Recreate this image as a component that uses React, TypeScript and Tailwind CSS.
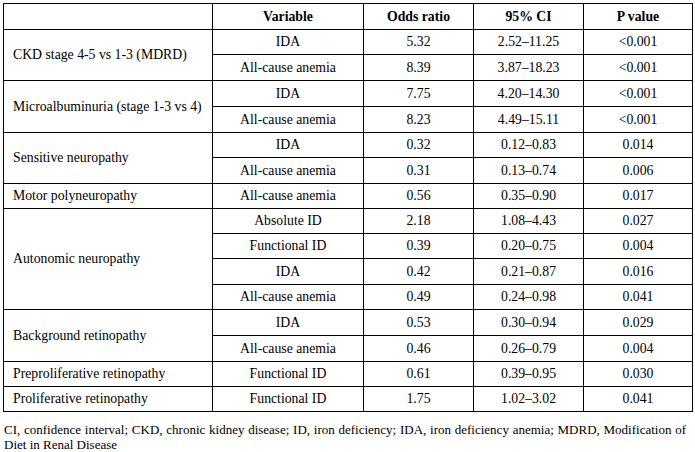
import React from "react";

type Row = { v: string; or: string; ci: string; p: string; h: string };
type Group = { label: string; rows: Row[] };

const groups: Group[] = [
  {
    label: "CKD stage 4-5 vs 1-3 (MDRD)",
    rows: [
      { v: "IDA", or: "5.32", ci: "2.52–11.25", p: "<0.001", h: "h-[25px]" },
      { v: "All-cause anemia", or: "8.39", ci: "3.87–18.23", p: "<0.001", h: "h-[26px]" },
    ],
  },
  {
    label: "Microalbuminuria (stage 1-3 vs 4)",
    rows: [
      { v: "IDA", or: "7.75", ci: "4.20–14.30", p: "<0.001", h: "h-[26px]" },
      { v: "All-cause anemia", or: "8.23", ci: "4.49–15.11", p: "<0.001", h: "h-[26px]" },
    ],
  },
  {
    label: "Sensitive neuropathy",
    rows: [
      { v: "IDA", or: "0.32", ci: "0.12–0.83", p: "0.014", h: "h-[25px]" },
      { v: "All-cause anemia", or: "0.31", ci: "0.13–0.74", p: "0.006", h: "h-[26px]" },
    ],
  },
  {
    label: "Motor polyneuropathy",
    rows: [{ v: "All-cause anemia", or: "0.56", ci: "0.35–0.90", p: "0.017", h: "h-[25px]" }],
  },
  {
    label: "Autonomic neuropathy",
    rows: [
      { v: "Absolute ID", or: "2.18", ci: "1.08–4.43", p: "0.027", h: "h-[25px]" },
      { v: "Functional ID", or: "0.39", ci: "0.20–0.75", p: "0.004", h: "h-[25px]" },
      { v: "IDA", or: "0.42", ci: "0.21–0.87", p: "0.016", h: "h-[26px]" },
      { v: "All-cause anemia", or: "0.49", ci: "0.24–0.98", p: "0.041", h: "h-[25px]" },
    ],
  },
  {
    label: "Background retinopathy",
    rows: [
      { v: "IDA", or: "0.53", ci: "0.30–0.94", p: "0.029", h: "h-[26px]" },
      { v: "All-cause anemia", or: "0.46", ci: "0.26–0.79", p: "0.004", h: "h-[26px]" },
    ],
  },
  {
    label: "Preproliferative retinopathy",
    rows: [{ v: "Functional ID", or: "0.61", ci: "0.39–0.95", p: "0.030", h: "h-[25px]" }],
  },
  {
    label: "Proliferative retinopathy",
    rows: [{ v: "Functional ID", or: "1.75", ci: "1.02–3.02", p: "0.041", h: "h-[25px]" }],
  },
];

const cell = "border border-black text-center align-middle p-0";

export default function App() {
  return (
    <div
      className="bg-white text-black w-[695px] h-[452px] pt-[3px] pl-[3px] overflow-hidden"
      style={{ fontFamily: '"Liberation Serif", "Times New Roman", serif' }}
    >
      <table className="table-fixed border-collapse w-[689px] text-[13.75px] leading-[16px]">
        <colgroup>
          <col className="w-[209px]" />
          <col className="w-[151px]" />
          <col className="w-[110px]" />
          <col className="w-[110px]" />
          <col className="w-[109px]" />
        </colgroup>
        <thead>
          <tr className="h-[26px] font-bold">
            <th className={cell}></th>
            <th className={cell}>Variable</th>
            <th className={cell}>Odds ratio</th>
            <th className={cell}>95% CI</th>
            <th className={cell}>P value</th>
          </tr>
        </thead>
        <tbody>
          {groups.map((g) =>
            g.rows.map((r, i) => (
              <tr key={g.label + i} className={r.h}>
                {i === 0 && (
                  <td
                    rowSpan={g.rows.length}
                    className="border border-black text-left align-middle pl-[9px] pr-1 py-0"
                  >
                    {g.label}
                  </td>
                )}
                <td className={cell}>{r.v}</td>
                <td className={cell}>{r.or}</td>
                <td className={cell}>{r.ci}</td>
                <td className={cell}>{r.p}</td>
              </tr>
            ))
          )}
        </tbody>
      </table>
      <p className="mt-[10px] ml-[1px] w-[682px] text-[13px] leading-[15px] text-justify">
        CI, confidence interval; CKD, chronic kidney disease; ID, iron deficiency; IDA, iron deficiency anemia; MDRD, Modification of Diet in Renal Disease
      </p>
    </div>
  );
}
